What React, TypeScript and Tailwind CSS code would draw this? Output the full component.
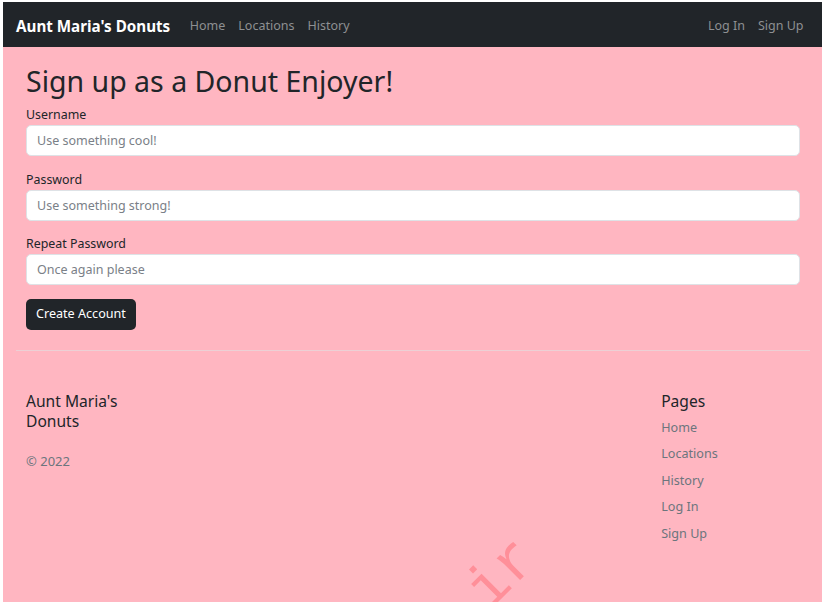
import React from "react";

const font = { fontFamily: '"Noto Sans", "Open Sans", sans-serif' };

function Field({ label, placeholder }: { label: string; placeholder: string }) {
  return (
    <div className="mb-[13.5px]">
      <div className="h-[20px] text-[12.4px] leading-[20px] text-[#212529]">{label}</div>
      <input
        className="block h-[31px] w-full rounded-[5px] border border-[#dee2e6] bg-white px-[10px] text-[12.5px] text-[#212529] outline-none placeholder:text-[#7a8087]"
        placeholder={placeholder}
        style={font}
      />
    </div>
  );
}

export default function App() {
  const navLink = "px-[6.5px] text-[12.5px] text-[#8e9092]";
  return (
    <div className="min-h-screen bg-white pl-[3px] pr-[2px] pt-[2px]" style={font}>
      <div className="relative h-[600px] overflow-hidden bg-[#ffb6c1]">
        <nav className="flex h-[45px] items-center bg-[#212529] pl-[13px] pr-[12px] pt-[3px]">
          <span className="mr-[13px] text-[15.2px] font-bold text-white">Aunt Maria's Donuts</span>
          <a className={navLink}>Home</a>
          <a className={navLink}>Locations</a>
          <a className={navLink}>History</a>
          <div className="ml-auto flex">
            <a className={navLink}>Log In</a>
            <a className={navLink}>Sign Up</a>
          </div>
        </nav>

        <main className="ml-[13px] mr-[12px] px-[10px] pt-[14px]">
          <h1 className="mb-[4px] text-[28.5px] leading-[40px] text-[#212529]">Sign up as a Donut Enjoyer!</h1>
          <Field label="Username" placeholder="Use something cool!" />
          <Field label="Password" placeholder="Use something strong!" />
          <Field label="Repeat Password" placeholder="Once again please" />
          <button className="h-[31px] rounded-[5px] bg-[#212529] px-[10px] text-[12.6px] text-white">
            Create Account
          </button>
        </main>

        <footer className="ml-[13px] mr-[12px] mt-[20px] border-t border-[#ecd0d5] pt-[40px]">
          <div className="grid grid-cols-5">
            <div className="px-[10px]">
              <div className="mb-[21px] text-[15.6px] leading-[20px] text-[#212529]">Aunt Maria's Donuts</div>
              <div className="text-[13px] text-[#6c757d]">© 2022</div>
            </div>
            <div />
            <div />
            <div />
            <div className="px-[10px]">
              <div className="mb-[4px] text-[15.6px] leading-[20px] text-[#212529]">Pages</div>
              <ul className="flex flex-col">
                {["Home", "Locations", "History", "Log In", "Sign Up"].map((l) => (
                  <li key={l} className="h-[26.5px] text-[12.6px] leading-[26.5px] text-[#6c757d]">
                    {l}
                  </li>
                ))}
              </ul>
            </div>
          </div>
        </footer>

        <div
          className="absolute left-[453px] top-[577px] origin-top-left -rotate-45 whitespace-nowrap text-[60px] leading-none text-[#ff8f99]"
          style={{ fontFamily: '"Liberation Mono", monospace' }}
        >
          ir
        </div>
      </div>
    </div>
  );
}
